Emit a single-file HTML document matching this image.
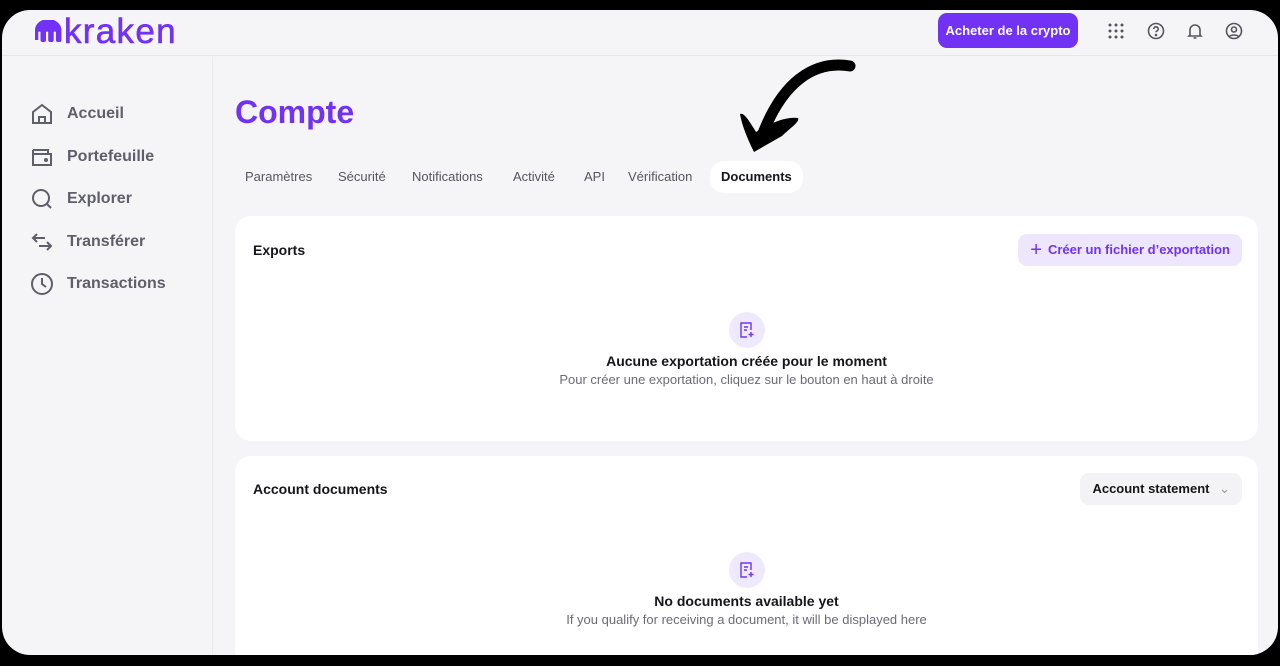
<!DOCTYPE html>
<html><head><meta charset="utf-8"><style>
*{margin:0;padding:0;box-sizing:border-box}
body{width:1280px;height:666px;background:#000;font-family:"Liberation Sans",sans-serif;overflow:hidden;position:relative}
.app{position:absolute;left:2px;top:10px;width:1276px;height:645px;background:#f5f5f8;border-radius:28px;overflow:hidden}
.hdr{position:absolute;left:0;top:0;right:0;height:46px;border-bottom:1px solid #e6e6ec}
.logo{position:absolute;left:62px;top:2px;font-size:35px;color:#7132f5;letter-spacing:1.3px;-webkit-text-stroke:0.6px #7132f5}
.buy{position:absolute;left:936px;top:3px;width:140px;height:35px;background:#7132f5;color:#fff;border-radius:9px;font-size:13px;font-weight:bold;text-align:center;line-height:35px}
.side{position:absolute;left:0;top:47px;width:211px;bottom:0;border-right:1px solid #e9e9ee}
.nav{position:absolute;left:28px;display:flex;align-items:center;font-size:16px;font-weight:bold;color:#5f5f6b}
.nav svg{margin-right:13px}
h1{position:absolute;left:233px;top:84px;font-size:32px;color:#7132f5;font-weight:bold}
.tabs{position:absolute;top:151px;font-size:13px;color:#55555f}
.tab{position:absolute;top:0;height:32px;line-height:32px;white-space:nowrap}
.card{position:absolute;left:233px;width:1023px;background:#fff;border-radius:16px}
.t{position:absolute;font-size:14px;font-weight:bold;color:#15151b}
.c{position:absolute;left:0;right:0;text-align:center}
.ic{width:36px;height:36px;border-radius:50%;background:#efe9fd;margin:0 auto;display:flex;align-items:center;justify-content:center}
.sub{font-size:13px;color:#6b6b76;margin-top:3px}
</style></head><body>
<div class="app">
 <div class="hdr">
  <svg style="position:absolute;left:28px;top:10px" width="34" height="22" fill="#7132f5"><path d="M0 22V12A12 11 0 0 1 24 12V22 A2.5 2.5 0 0 1 19 22V14 A1.2 1.2 0 0 0 17 14V22 A2.5 2.5 0 0 1 12 22V14 A1.2 1.2 0 0 0 10 14V22 A2.5 2.5 0 0 1 5 22V14 A1.2 1.2 0 0 0 3 14V22z" transform="translate(5 -2) scale(1.1 1)"/></svg>
  <div class="logo">kraken</div>
  <div class="buy">Acheter de la crypto</div>
  <svg style="position:absolute;left:1106px;top:13px" width="16" height="16" fill="#55555f"><g><circle cx="2" cy="2" r="1.5"/><circle cx="8" cy="2" r="1.5"/><circle cx="14" cy="2" r="1.5"/><circle cx="2" cy="8" r="1.5"/><circle cx="8" cy="8" r="1.5"/><circle cx="14" cy="8" r="1.5"/><circle cx="2" cy="14" r="1.5"/><circle cx="8" cy="14" r="1.5"/><circle cx="14" cy="14" r="1.5"/></g></svg>
  <svg style="position:absolute;left:1145px;top:12px" width="18" height="18" fill="none" stroke="#55555f" stroke-width="1.6"><circle cx="9" cy="9" r="7.5"/><path d="M6.8 7a2.2 2.2 0 1 1 2.8 2.1c-.5.2-.6.6-.6 1.2"/><circle cx="9" cy="13" r=".5" fill="#55555f"/></svg>
  <svg style="position:absolute;left:1184px;top:12px" width="18" height="18" fill="none" stroke="#55555f" stroke-width="1.6"><path d="M4 13V8a5 5 0 0 1 10 0v5l1 1H3z M7.5 16h3"/></svg>
  <svg style="position:absolute;left:1223px;top:12px" width="18" height="18" fill="none" stroke="#55555f" stroke-width="1.6"><circle cx="9" cy="9" r="7.5"/><circle cx="9" cy="7.5" r="2.5"/><path d="M4.5 14.5c1.5-2 7.5-2 9 0"/></svg>
 </div>
 <div class="side">
  <div class="nav" style="top:45px"><svg width="24" height="24" fill="none" stroke="#5f5f6b" stroke-width="2"><path d="M3 10L12 3l9 7v11H3z M9 21v-6h6v6"/></svg>Accueil</div>
  <div class="nav" style="top:88px"><svg width="24" height="24" fill="none" stroke="#5f5f6b" stroke-width="2"><path d="M3 5h15v4 M3 5v15h18V9H3"/><circle cx="16" cy="15" r="1" fill="#5f5f6b"/></svg>Portefeuille</div>
  <div class="nav" style="top:130px"><svg width="24" height="24" fill="none" stroke="#5f5f6b" stroke-width="2"><circle cx="11" cy="11" r="8"/><path d="M17 17l4 4"/></svg>Explorer</div>
  <div class="nav" style="top:173px"><svg width="24" height="24" fill="none" stroke="#5f5f6b" stroke-width="2"><path d="M7 4L3 8l4 4 M3 8h12 M17 12l4 4-4 4 M21 16H9"/></svg>Transférer</div>
  <div class="nav" style="top:215px"><svg width="24" height="24" fill="none" stroke="#5f5f6b" stroke-width="2"><circle cx="12" cy="12" r="10"/><path d="M12 6v6l4 3"/></svg>Transactions</div>
 </div>
 <h1>Compte</h1>
 <div class="tabs">
  <div class="tab" style="left:243px">Paramètres</div>
  <div class="tab" style="left:336px">Sécurité</div>
  <div class="tab" style="left:410px">Notifications</div>
  <div class="tab" style="left:511px">Activité</div>
  <div class="tab" style="left:582px">API</div>
  <div class="tab" style="left:626px">Vérification</div>
  <div class="tab" style="left:708px;background:#fff;border-radius:14px;padding:0 11px;color:#15151b;font-weight:bold">Documents</div>
 </div>
 <svg style="position:absolute;left:732px;top:42px" width="124" height="104">
  <path d="M116 14C80 8 48 30 28 84" fill="none" stroke="#000" stroke-width="11" stroke-linecap="round"/>
  <path d="M6 62C10 60 16 70 22 80 C34 72 52 64 64 66 C66 70 56 76 48 84 L20 100 C14 88 8 74 6 62Z" fill="#000"/>
 </svg>
 <div class="card" style="top:206px;height:225px">
  <div class="t" style="left:18px;top:26px">Exports</div>
  <div style="position:absolute;right:16px;top:18px;height:32px;padding:0 12px;background:#ede6fd;border-radius:9px;color:#7132f5;font-size:13px;font-weight:bold;line-height:32px"><span style="font-size:20px;font-weight:normal;vertical-align:-2px;margin-right:6px">+</span>Créer un fichier d’exportation</div>
  <div class="c" style="top:96px"><div class="ic"><svg width="18" height="18" fill="none" stroke="#7132f5" stroke-width="1.4"><path d="M9 16H3V2h10v7 M6 6h4 M6 9h3 M13 11v5 M10.5 13.5h5"/></svg></div>
   <div style="font-size:14px;font-weight:bold;color:#15151b;margin-top:5px">Aucune exportation créée pour le moment</div>
   <div class="sub">Pour créer une exportation, cliquez sur le bouton en haut à droite</div></div>
 </div>
 <div class="card" style="top:446px;height:220px">
  <div class="t" style="left:18px;top:25px">Account documents</div>
  <div style="position:absolute;right:16px;top:17px;height:32px;padding:0 12px;background:#f3f3f5;border-radius:9px;color:#15151b;font-size:13px;font-weight:bold;line-height:32px">Account statement <span style="color:#999;font-weight:normal;margin-left:6px">⌄</span></div>
  <div class="c" style="top:96px"><div class="ic"><svg width="18" height="18" fill="none" stroke="#7132f5" stroke-width="1.4"><path d="M9 16H3V2h10v7 M6 6h4 M6 9h3 M13 11v5 M10.5 13.5h5"/></svg></div>
   <div style="font-size:14px;font-weight:bold;color:#15151b;margin-top:5px">No documents available yet</div>
   <div class="sub">If you qualify for receiving a document, it will be displayed here</div></div>
 </div>
</div>
</body></html>
